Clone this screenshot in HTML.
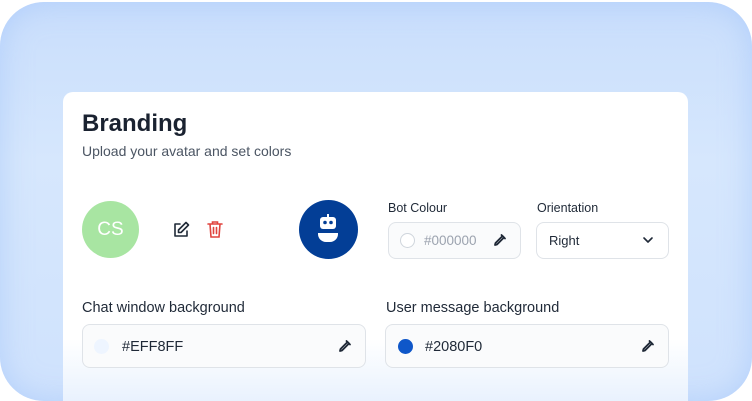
<!DOCTYPE html>
<html><head><meta charset="utf-8"><style>
*{box-sizing:border-box;margin:0;padding:0}
html,body{width:752px;height:401px;overflow:hidden}
body{background:#fff;font-family:"Liberation Sans",sans-serif;position:relative}
.bg{position:absolute;left:0;top:2px;width:752px;height:399px;border-radius:44px;background:linear-gradient(180deg,#c9defc 0%,#d6e7fd 40%,#cfe2fd 100%);box-shadow:inset 0 0 30px rgba(160,195,250,.6)}
.card{position:absolute;left:63px;top:92px;width:625px;height:309px;border-radius:10px 10px 0 0;background:linear-gradient(180deg,#fff 0%,#fff 80%,#e9f2fe 100%)}
.t{position:absolute;color:#111827}
.lbl{position:absolute;font-size:13px;color:#1f2937}
.inp{position:absolute;border:1px solid #dfe3e8;border-radius:8px;background:#fafbfc}
</style></head><body>
<div class="bg"></div>
<div class="card"></div>
<div class="t" style="left:82px;top:110px;font-size:24px;font-weight:bold;color:#1a2230">Branding</div>
<div class="t" style="left:82px;top:143px;font-size:14px;color:#4b5563">Upload your avatar and set colors</div>
<div style="position:absolute;left:82px;top:201px;width:57px;height:57px;border-radius:50%;background:#a8e5a2;color:#fff;font-size:19px;display:flex;align-items:center;justify-content:center">CS</div>
<svg style="position:absolute;left:171px;top:220px" width="20" height="20" viewBox="0 0 20 20" fill="none" stroke="#1f2937" stroke-width="1.6" stroke-linecap="round" stroke-linejoin="round"><path d="M9 4H4v12h12v-5"/><path d="M15 2.5l2.5 2.5L10 12.5H7.5V10z"/></svg>
<svg style="position:absolute;left:205px;top:219px" width="20" height="21" viewBox="0 0 20 21" fill="none" stroke="#e0443e" stroke-width="1.6" stroke-linecap="round"><path d="M3 5h14M7.5 5V3h5v2M5 5l1 13h8l1-13M8.5 8.5v6M11.5 8.5v6"/></svg>
<div style="position:absolute;left:299px;top:200px;width:59px;height:59px;border-radius:50%;background:#033e96"></div>
<svg style="position:absolute;left:313px;top:213px" width="30" height="32" viewBox="0 0 30 32"><rect x="14" y="1" width="2" height="3" fill="#fff"/><rect x="7" y="4" width="16" height="12" rx="3" fill="#fff"/><circle cx="12" cy="9.5" r="1.8" fill="#033e96"/><circle cx="18" cy="9.5" r="1.8" fill="#033e96"/><path d="M5 20h20v1a8 8 0 0 1-8 8h-4a8 8 0 0 1-8-8z" fill="#fff"/></svg>
<div class="lbl" style="left:388px;top:201px;font-size:12.5px">Bot Colour</div>
<div class="inp" style="left:388px;top:222px;width:133px;height:37px"></div>
<div style="position:absolute;left:400px;top:233px;width:15px;height:15px;border-radius:50%;border:1px solid #cfd5dc;background:#fff"></div>
<div class="t" style="left:424px;top:233px;font-size:13.5px;color:#9ca3af">#000000</div>
<svg style="position:absolute;left:493px;top:233px" width="14" height="14" viewBox="0 0 14 14" fill="none" stroke="#1f2937" stroke-width="1.8" stroke-linecap="round" stroke-linejoin="round"><path d="M9.5 3l1.5 1.5L4 11.5 2 12l.5-2z"/><path d="M8.5 2l3.5 3.5"/></svg>
<div class="lbl" style="left:537px;top:201px;font-size:12.5px">Orientation</div>
<div class="inp" style="left:536px;top:222px;width:133px;height:37px;background:#fff"></div>
<div class="t" style="left:549px;top:233px;font-size:13px;color:#1f2937">Right</div>
<svg style="position:absolute;left:642px;top:235px" width="12" height="10" viewBox="0 0 12 10" fill="none" stroke="#1f2937" stroke-width="1.6" stroke-linecap="round" stroke-linejoin="round"><path d="M2 3l4 4 4-4"/></svg>
<div class="lbl" style="left:82px;top:300px;font-size:14.5px">Chat window background</div>
<div class="inp" style="left:82px;top:324px;width:284px;height:44px"></div>
<div style="position:absolute;left:94px;top:339px;width:15px;height:15px;border-radius:50%;background:#eef5ff"></div>
<div class="t" style="left:122px;top:339px;font-size:14.5px;color:#1f2937">#EFF8FF</div>
<svg style="position:absolute;left:338px;top:339px" width="14" height="14" viewBox="0 0 14 14" fill="none" stroke="#1f2937" stroke-width="1.8" stroke-linecap="round" stroke-linejoin="round"><path d="M9.5 3l1.5 1.5L4 11.5 2 12l.5-2z"/><path d="M8.5 2l3.5 3.5"/></svg>
<div class="lbl" style="left:386px;top:300px;font-size:14.5px">User message background</div>
<div class="inp" style="left:385px;top:324px;width:284px;height:44px"></div>
<div style="position:absolute;left:398px;top:339px;width:15px;height:15px;border-radius:50%;background:#0f57c9"></div>
<div class="t" style="left:425px;top:339px;font-size:14.5px;color:#1f2937">#2080F0</div>
<svg style="position:absolute;left:641px;top:339px" width="14" height="14" viewBox="0 0 14 14" fill="none" stroke="#1f2937" stroke-width="1.8" stroke-linecap="round" stroke-linejoin="round"><path d="M9.5 3l1.5 1.5L4 11.5 2 12l.5-2z"/><path d="M8.5 2l3.5 3.5"/></svg>
</body></html>
